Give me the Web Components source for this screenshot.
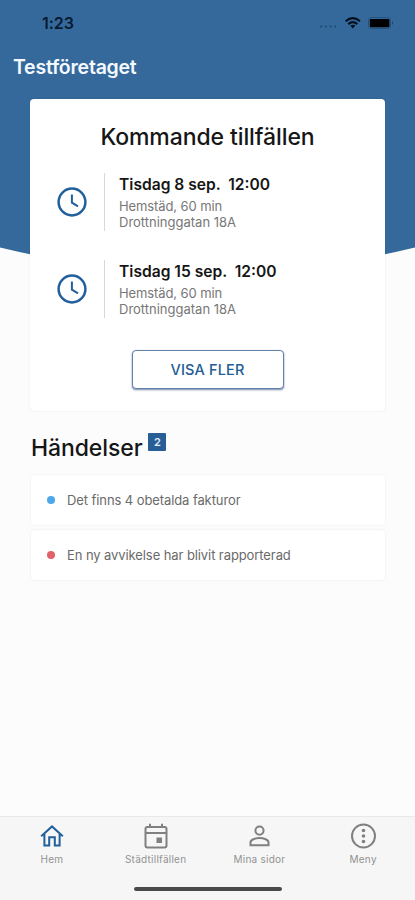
<!DOCTYPE html>
<html lang="sv">
<head>
<meta charset="utf-8">
<title>Testföretaget</title>
<style>
html,body{margin:0;height:100%}
body{background:#fcfcfc;font-family:Inter,"Liberation Sans",sans-serif;color:#161616;overflow:hidden}
</style>
</head>
<body>
<home-screen></home-screen>
<script>
const define = (name, html) => {
  const t = document.createElement('template');
  t.innerHTML = html;
  customElements.define(name, class extends HTMLElement {
    constructor() {
      super();
      this.attachShadow({mode: 'open'}).append(t.content.cloneNode(true));
    }
  });
};

define('status-bar', `
<style>
:host{display:flex;box-sizing:border-box;height:46px;padding:0 21px 0 42px;align-items:center;color:#071a30}
.time{flex:1;font-size:16px;font-weight:600;line-height:20px;letter-spacing:-.05px}
svg{display:block}
</style>
<span class="time">1:23</span>
<svg width="76" height="20" viewBox="0 0 76 20">
  <g fill="#1f4a78"><circle cx="3.2" cy="13.6" r="1.1"/><circle cx="7.9" cy="13.6" r="1.1"/><circle cx="12.6" cy="13.6" r="1.1"/><circle cx="17.3" cy="13.6" r="1.1"/></g>
  <g fill="none" stroke="#031020" stroke-width="2.1"><path d="M27.6 8.2Q34.8 1.9 42 8.2"/><path d="M30.3 11.1Q34.8 7.3 39.3 11.1"/></g>
  <path d="M32.3 12.8Q34.8 10.9 37.3 12.8L34.8 15.6Z" fill="#031020"/>
  <rect x="50.5" y="4.5" width="22" height="11" rx="2.5" fill="none" stroke="#265480"/>
  <rect x="51.8" y="6" width="19.6" height="8.2" rx="1" fill="#000"/>
  <path d="M74 8Q76.3 10 74 12Z" fill="#1c4873"/>
</svg>`);

define('clock-icon', `
<style>:host{display:block;width:30px;height:30px}svg{display:block}</style>
<svg width="30" height="30" viewBox="0 0 30 30" fill="none" stroke="#22609b"><circle cx="15" cy="15" r="13.4" stroke-width="2.5"/><path d="M14.9 7.5V15.6L21 19.4" stroke-width="2"/></svg>`);

define('visit-row', `
<style>
:host{display:grid;grid-template-columns:75px 1fr;height:57px}
.icon{display:flex;align-items:center;padding-left:26.5px;border-right:1px solid #d8d8d8}
.body{padding-left:14px}
.title{font-size:15.6px;font-weight:600;line-height:23px;white-space:pre}
.line{font-size:13px;line-height:16.3px;color:#777;letter-spacing:0}
.line.what{letter-spacing:-.1px;padding-top:2px}
</style>
<div class="icon"><clock-icon></clock-icon></div>
<div class="body"><div class="title"><slot name="when"></slot></div><div class="line what"><slot name="what"></slot></div><div class="line"><slot name="where"></slot></div></div>`);

define('outline-button', `
<style>
:host{display:flex;box-sizing:border-box;width:152px;height:39px;border:1px solid #5f81ac;border-radius:4px;background:#fff;align-items:center;justify-content:center;color:#245c94;font-size:14.5px;font-weight:500;box-shadow:0 1px 2px rgba(20,50,110,.6);letter-spacing:.15px}
</style><slot></slot>`);

define('visits-card', `
<style>
:host{display:flex;flex-direction:column;align-items:stretch;box-sizing:border-box;margin:0 30px;height:312px;background:#fff;border-radius:4px;box-shadow:0 0 2px rgba(0,0,0,.10)}
h2{margin:0;padding-top:24px;text-align:center;font-size:23px;font-weight:500;line-height:28px;letter-spacing:-.09px}
.rows{display:flex;flex-direction:column;gap:30px;padding-top:22px}
outline-button{align-self:center;margin-top:33px}
</style>
<h2>Kommande tillfällen</h2>
<div class="rows"><slot></slot></div>
<outline-button>VISA FLER</outline-button>`);

define('event-card', `
<style>
:host{display:flex;align-items:center;box-sizing:border-box;height:50px;padding-left:16px;background:#fff;border-radius:4px;box-shadow:0 0 2px 1px rgba(0,0,0,.035);font-size:13px;color:#6a6a6a;letter-spacing:-.09px}
i{width:8px;height:8px;border-radius:50%;background:var(--dot);margin-right:12px}
</style><i></i><span><slot></slot></span>`);

define('event-list', `
<style>
:host{display:block;padding:20px 30px 0 31px}
header{display:flex;height:36px}
h2{margin:0;padding-top:3px;font-size:23px;font-weight:500;line-height:28px;letter-spacing:-.1px}
b{width:18px;height:18px;margin:2px 0 0 6px;border-radius:1px;background:#285e96;color:#e4eefa;font-size:11px;line-height:18px;text-align:center;font-weight:600}
.list{display:grid;gap:5px;padding-top:8px}
</style>
<header><h2>Händelser</h2><b>2</b></header>
<div class="list"><slot></slot></div>`);

define('tab-item', `
<style>
:host{display:flex;flex-direction:column;align-items:center;color:#808080}
span{font-size:10px;line-height:12px;margin-top:3px;color:#929292;letter-spacing:.25px;white-space:nowrap}
</style><slot name="icon"></slot><span><slot></slot></span>`);

define('tab-bar', `
<style>
:host{display:block;box-sizing:border-box;height:84px;background:#f6f6f6;border-top:1px solid #e9e9e9}
nav{display:grid;grid-template-columns:repeat(4,1fr);padding-top:5px}
svg{display:block;width:28px;height:28px;fill:none;stroke:currentColor;stroke-width:2}
.home{color:#22609b}
hr{width:148px;height:4px;margin:22px auto 0;border:0;border-radius:2px;background:#4a4a4a}
</style>
<nav>
<tab-item><svg slot="icon" class="home" viewBox="0 0 28 28"><path d="M3.2 14.3L14 4.4L24.8 14.3M6.4 12V23.4H11.2V15.3H16.8V23.4H21.6V12"/></svg>Hem</tab-item>
<tab-item><svg slot="icon" viewBox="0 0 28 28"><rect x="3.5" y="5" width="21" height="20.5" rx="2"/><path d="M3.5 11H24.5M8 1.8V5M20 1.8V5"/><rect x="14.5" y="15.5" width="5.5" height="5.5" fill="currentColor" stroke="none"/></svg>Städtillfällen</tab-item>
<tab-item><svg slot="icon" viewBox="0 0 28 28"><circle cx="14.5" cy="8.6" r="4.1"/><path d="M5.5 23.2V20.3C5.5 17.7 10.3 16.1 14.5 16.1S23.5 17.7 23.5 20.3V23.2Z"/></svg>Mina sidor</tab-item>
<tab-item><svg slot="icon" viewBox="0 0 28 28"><circle cx="14.5" cy="14" r="11.5"/><g fill="currentColor" stroke="none"><circle cx="14.5" cy="8.5" r="1.8"/><circle cx="14.5" cy="14" r="1.8"/><circle cx="14.5" cy="19.5" r="1.8"/></g></svg>Meny</tab-item>
</nav><hr>`);

define('home-screen', `
<style>
:host{display:grid;grid-template-rows:46px 53px 312px 1fr 84px;height:900px;background:#fcfcfc}
.sky{position:absolute;top:0;left:0;width:415px;height:280px;background:#35699b;clip-path:path('M0 0H415V247.5Q207.5 298 0 247.5Z')}
status-bar,h1,visits-card{position:relative}
h1{margin:0;padding:7px 0 0 13px;color:#f4f9ff;font-size:19.5px;font-weight:600;line-height:28px;letter-spacing:-.23px}
</style>
<div class="sky"></div>
<status-bar></status-bar>
<h1>Testföretaget</h1>
<visits-card>
<visit-row><span slot="when">Tisdag 8 sep.  12:00</span><span slot="what">Hemstäd, 60 min</span><span slot="where">Drottninggatan 18A</span></visit-row>
<visit-row><span slot="when">Tisdag 15 sep.  12:00</span><span slot="what">Hemstäd, 60 min</span><span slot="where">Drottninggatan 18A</span></visit-row>
</visits-card>
<event-list>
<event-card style="--dot:#4ba8ea">Det finns 4 obetalda fakturor</event-card>
<event-card style="--dot:#e2626a">En ny avvikelse har blivit rapporterad</event-card>
</event-list>
<tab-bar></tab-bar>`);

// The svg icons sit in a shadow tree and are slotted into each tab.
</script>
</body>
</html>
